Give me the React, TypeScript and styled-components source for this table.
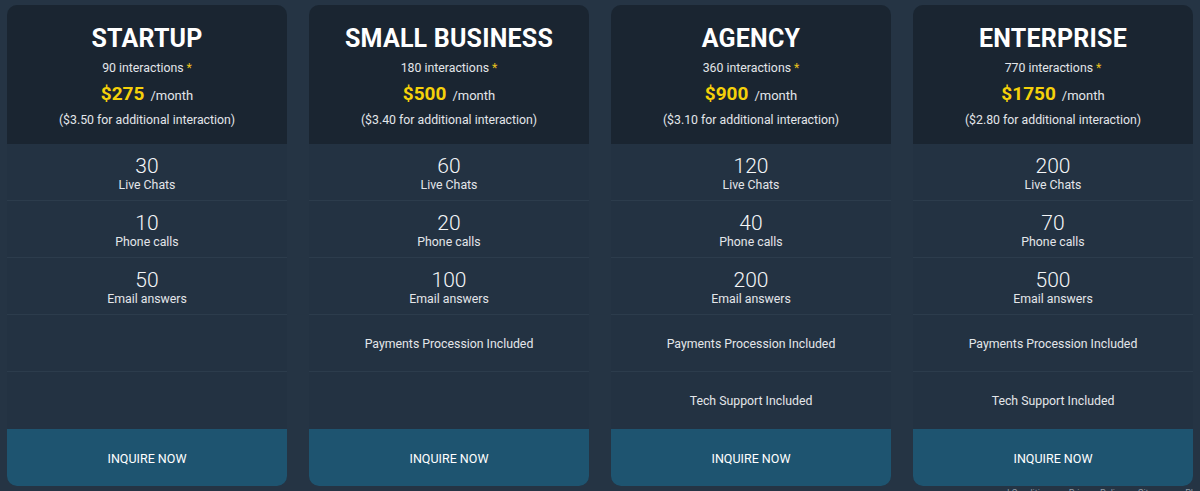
import React from "react";
import styled, { createGlobalStyle } from "styled-components";

const Global = createGlobalStyle`
  html, body { margin: 0; padding: 0; background: #253444; }
  body { font-family: Roboto, "Liberation Sans", Arial, sans-serif; color: #e6e9ec; }
`;

const Page = styled.div`
  padding: 5px 7px 0;
`;

const Grid = styled.div`
  display: grid;
  grid-template-columns: repeat(4, 1fr);
  gap: 22px;
`;

const Card = styled.div`
  border-radius: 10px;
  overflow: hidden;
  background: #233242;
  display: flex;
  flex-direction: column;
`;

const Header = styled.div`
  background: #1a2531;
  height: 139px;
  box-sizing: border-box;
  padding-top: 19px;
  display: flex;
  flex-direction: column;
  align-items: center;
  text-align: center;
`;

const Title = styled.div`
  font-size: 25px;
  font-weight: 700;
  line-height: 30px;
  color: #ffffff;
  letter-spacing: 0.2px;
`;

const Interactions = styled.div`
  margin-top: 5px;
  font-size: 12.3px;
  line-height: 18px;
  color: #e3e6ea;
`;

const Star = styled.span`
  color: #e8c21c;
  margin-left: 3px;
`;

const PriceLine = styled.div`
  margin-top: 5px;
  line-height: 24px;
  font-size: 13px;
  color: #e3e6ea;
`;

const Price = styled.span`
  font-size: 19px;
  font-weight: 700;
  color: #f5d10a;
  margin-right: 6px;
`;

const Additional = styled.div`
  margin-top: 3px;
  font-size: 12.3px;
  line-height: 18px;
  color: #e3e6ea;
`;

const Row = styled.div<{ $stat?: boolean }>`
  height: 57px;
  box-sizing: border-box;
  padding-top: ${(p) => (p.$stat ? "3px" : "0")};
  border-bottom: 1px solid #2c3c4c;
  display: flex;
  flex-direction: column;
  align-items: center;
  justify-content: center;
  text-align: center;
  &:last-of-type { border-bottom: none; }
`;

const Num = styled.div`
  font-size: 21px;
  font-weight: 300;
  line-height: 22px;
  color: #f4f6f8;
`;

const Label = styled.div`
  font-size: 12.3px;
  line-height: 16px;
  color: #e3e6ea;
`;

const Feature = styled.div`
  font-size: 12.3px;
  line-height: 16px;
  color: #e3e6ea;
  padding-top: 1px;
`;

const Button = styled.button`
  height: 57px;
  border: none;
  background: #1e5470;
  color: #ffffff;
  font-family: inherit;
  font-size: 12.5px;
  font-weight: 400;
  text-transform: uppercase;
  cursor: pointer;
  padding: 2px 0 0;
`;

const Footer = styled.div`
  display: flex;
  justify-content: flex-end;
  gap: 14px;
  padding: 1px 0 0 0;
  margin-left: 980px;
  font-size: 9px;
  line-height: 12px;
  color: #8e99a4;
  white-space: nowrap;
  overflow: hidden;
`;

type Plan = {
  name: string;
  interactions: number;
  price: string;
  extra: string;
  chats: number;
  calls: number;
  emails: number;
  payments: boolean;
  support: boolean;
};

const plans: Plan[] = [
  { name: "STARTUP", interactions: 90, price: "$275", extra: "$3.50", chats: 30, calls: 10, emails: 50, payments: false, support: false },
  { name: "SMALL BUSINESS", interactions: 180, price: "$500", extra: "$3.40", chats: 60, calls: 20, emails: 100, payments: true, support: false },
  { name: "AGENCY", interactions: 360, price: "$900", extra: "$3.10", chats: 120, calls: 40, emails: 200, payments: true, support: true },
  { name: "ENTERPRISE", interactions: 770, price: "$1750", extra: "$2.80", chats: 200, calls: 70, emails: 500, payments: true, support: true },
];

export default function App() {
  return (
    <>
      <Global />
      <Page>
        <Grid>
          {plans.map((p) => (
            <Card key={p.name}>
              <Header>
                <Title>{p.name}</Title>
                <Interactions>
                  {p.interactions} interactions<Star>*</Star>
                </Interactions>
                <PriceLine>
                  <Price>{p.price}</Price>/month
                </PriceLine>
                <Additional>({p.extra} for additional interaction)</Additional>
              </Header>
              <Row $stat>
                <Num>{p.chats}</Num>
                <Label>Live Chats</Label>
              </Row>
              <Row $stat>
                <Num>{p.calls}</Num>
                <Label>Phone calls</Label>
              </Row>
              <Row $stat>
                <Num>{p.emails}</Num>
                <Label>Email answers</Label>
              </Row>
              <Row>{p.payments && <Feature>Payments Procession Included</Feature>}</Row>
              <Row>{p.support && <Feature>Tech Support Included</Feature>}</Row>
              <Button>Inquire Now</Button>
            </Card>
          ))}
        </Grid>
        <Footer>
          <span>Terms and Conditions</span>
          <span>Privacy Policy</span>
          <span>Sitemap</span>
          <span>Pl</span>
        </Footer>
      </Page>
    </>
  );
}
